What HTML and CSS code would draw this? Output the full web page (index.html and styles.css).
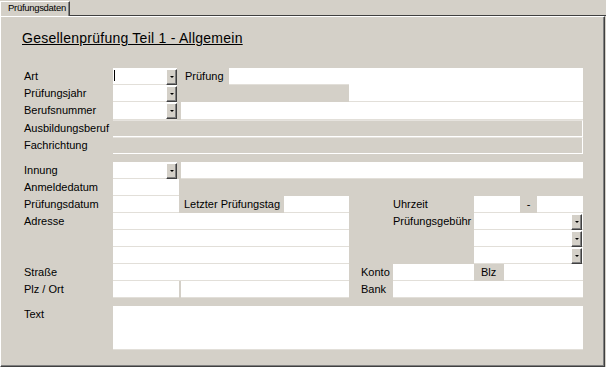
FILE: index.html
```html
<!DOCTYPE html>
<html lang="de">
<head>
    <meta charset="UTF-8">
    <title>Prüfungsdaten</title>
    <link rel="stylesheet" href="styles.css">
</head>
<body>
    <div class="tabs">
        <div class="tab">Prüfungsdaten</div>
    </div>
    <div class="page">
        <h1 class="page-title">Gesellenprüfung Teil 1 - Allgemein</h1>

        <!-- Formular: ein Raster, Zeilen 17px hoch -->
        <div class="form">
            <div class="lbl r1">Art</div>
            <div class="combo c-main r1"><span class="caret"></span><span class="btn"></span></div>
            <div class="lbl lbl-pruefung r1">Prüfung</div>
            <div class="field c-pruefung r1"></div>
            <div class="field c-note r1-2"></div>

            <div class="lbl r2">Prüfungsjahr</div>
            <div class="combo c-main r2"><span class="btn"></span></div>

            <div class="lbl r3">Berufsnummer</div>
            <div class="combo c-main r3"><span class="btn"></span></div>
            <div class="field c-rest r3"></div>

            <div class="lbl r4">Ausbildungsberuf</div>
            <div class="field disabled c-full r4"></div>

            <div class="lbl r5">Fachrichtung</div>
            <div class="field disabled c-full r5"></div>

            <div class="lbl r7">Innung</div>
            <div class="combo c-main r7"><span class="btn"></span></div>
            <div class="field c-rest r7"></div>

            <div class="lbl r8">Anmeldedatum</div>
            <div class="field c-short r8"></div>

            <div class="lbl r9">Prüfungsdatum</div>
            <div class="field c-short r9"></div>
            <div class="lbl lbl-letzter r9">Letzter Prüfungstag</div>
            <div class="field c-letzter r9"></div>
            <div class="lbl c-rlabel r9">Uhrzeit</div>
            <div class="field c-von r9"></div>
            <div class="lbl lbl-bis r9">-</div>
            <div class="field c-bis r9"></div>

            <div class="lbl r10">Adresse</div>
            <div class="field c-adr r10"></div>
            <div class="field c-adr r11"></div>
            <div class="field c-adr r12"></div>
            <div class="lbl c-rlabel r10">Prüfungsgebühr</div>
            <div class="combo c-gebuehr r10"><span class="btn"></span></div>
            <div class="combo c-gebuehr r11"><span class="btn"></span></div>
            <div class="combo c-gebuehr r12"><span class="btn"></span></div>

            <div class="lbl r13">Straße</div>
            <div class="field c-adr r13"></div>
            <div class="lbl c-klabel r13">Konto</div>
            <div class="field c-konto r13"></div>
            <div class="lbl lbl-blz r13">Blz</div>
            <div class="field c-blz r13"></div>

            <div class="lbl r14">Plz / Ort</div>
            <div class="field c-short r14"></div>
            <div class="field c-ort r14"></div>
            <div class="lbl c-klabel r14">Bank</div>
            <div class="field c-bank r14"></div>

            <div class="lbl r16">Text</div>
            <div class="field c-full r16"></div>
        </div>
    </div>
</body>
</html>
```

FILE: styles.css
```css
body {
    margin: 0;
    background-color: #d4d0c8;
    font-family: "Liberation Sans", Arial, sans-serif;
    font-size: 11px;
    color: #000;
}
.tabs {
    display: flex;
    height: 15px;
    border-bottom: 1px solid #404040;
}
.tab {
    box-sizing: border-box;
    width: 70px;
    height: 15px;
    margin-top: 1px;
    padding-left: 7px;
    background-color: #d4d0c8;
    border-top: 1px solid #fff;
    border-left: 1px solid #fff;
    border-right: 1px solid #404040;
    box-shadow: inset -1px 0 #808080;
    font-size: 9.5px;
    letter-spacing: -0.3px;
    line-height: 12px;
}
.page {
    box-sizing: border-box;
    width: 605px;
    height: 351px;
    padding-top: 13px;
    border-top: 1px solid #fff;
    border-left: 1px solid #fff;
    border-right: 1px solid #404040;
    border-bottom: 1px solid #404040;
    box-shadow: inset -1px -1px #808080;
}
.page-title {
    margin: 0 0 0 21px;
    font-size: 14px;
    font-weight: normal;
    letter-spacing: 0.25px;
    line-height: 16px;
    text-decoration: underline;
}
.form {
    display: grid;
    margin: 22px 0 0 23px;
    width: 559px;
    grid-template-columns: 89px 64px 2px 2px 48px 55px 65px 12px 32px 81px 30px 16px 17px 46px;
    grid-template-rows: 17px 17px 18px 17px 17px 8px 17px 17px 17px 17px 17px 17px 17px 17px 8px 44px;
}
.lbl {
    grid-column: 1;
    line-height: 17px;
    white-space: nowrap;
}
.field {
    background-color: #fff;
    box-shadow: inset 0 -1px #e2dfd9;
}
.field.disabled {
    background-color: #d4d0c8;
    border-top: 1px solid #e6e3de;
    border-right: 1px solid #fff;
    border-bottom: 1px solid #fff;
    box-shadow: none;
}
.combo {
    display: flex;
    align-items: flex-start;
    padding-top: 1px;
    background-color: #fff;
    box-shadow: inset 0 -1px #e2dfd9;
}
.combo .btn {
    box-sizing: border-box;
    width: 11px;
    height: 16px;
    margin-left: auto;
    display: flex;
    justify-content: center;
    align-items: center;
    background-color: #d4d0c8;
    border-top: 1px solid #fff;
    border-left: 1px solid #fff;
    border-right: 1px solid #404040;
    border-bottom: 1px solid #404040;
    box-shadow: inset -1px -1px #808080;
}
.combo .btn::after {
    content: "";
    border-top: 2px solid #000;
    border-left: 2px solid transparent;
    border-right: 2px solid transparent;
}
.c-gebuehr .btn {
    margin-right: 1px;
}
.caret {
    width: 1px;
    height: 11px;
    margin: 1px 0 0 1px;
    background-color: #000;
}

/* Zeilen */
.r1 { grid-row: 1; }
.r2 { grid-row: 2; }
.r1-2 { grid-row: 1 / 3; }
.r3 { grid-row: 3; }
.r4 { grid-row: 4; }
.r5 { grid-row: 5; }
.r7 { grid-row: 7; }
.r8 { grid-row: 8; }
.r9 { grid-row: 9; }
.r10 { grid-row: 10; }
.r11 { grid-row: 11; }
.r12 { grid-row: 12; }
.r13 { grid-row: 13; }
.r14 { grid-row: 14; }
.r16 { grid-row: 16; }
.lbl.r16 { align-self: start; }

/* Spalten */
.c-main { grid-column: 2 / 3; }
.c-short { grid-column: 2 / 4; }
.c-full { grid-column: 2 / 15; }
.c-rest { grid-column: 5 / 15; }
.c-pruefung { grid-column: 6 / 8; }
.c-note { grid-column: 8 / 15; }
.c-letzter { grid-column: 7 / 8; }
.c-adr { grid-column: 2 / 8; }
.c-ort { grid-column: 5 / 8; }
.c-von { grid-column: 11 / 13; }
.c-bis { grid-column: 14 / 15; }
.c-gebuehr { grid-column: 11 / 15; }
.c-konto { grid-column: 10 / 11; }
.c-blz { grid-column: 12 / 15; }
.c-bank { grid-column: 10 / 15; }

.lbl.lbl-pruefung {
    grid-column: 3 / 6;
    padding-left: 8px;
}
.lbl.lbl-letzter {
    grid-column: 4 / 7;
    padding-left: 5px;
}
.lbl.c-rlabel { grid-column: 10 / 11; }
.lbl.c-klabel { grid-column: 9 / 10; }
.lbl.lbl-bis {
    grid-column: 13 / 14;
    text-align: center;
}
.lbl.lbl-blz {
    grid-column: 11 / 12;
    padding-left: 7px;
}
```
